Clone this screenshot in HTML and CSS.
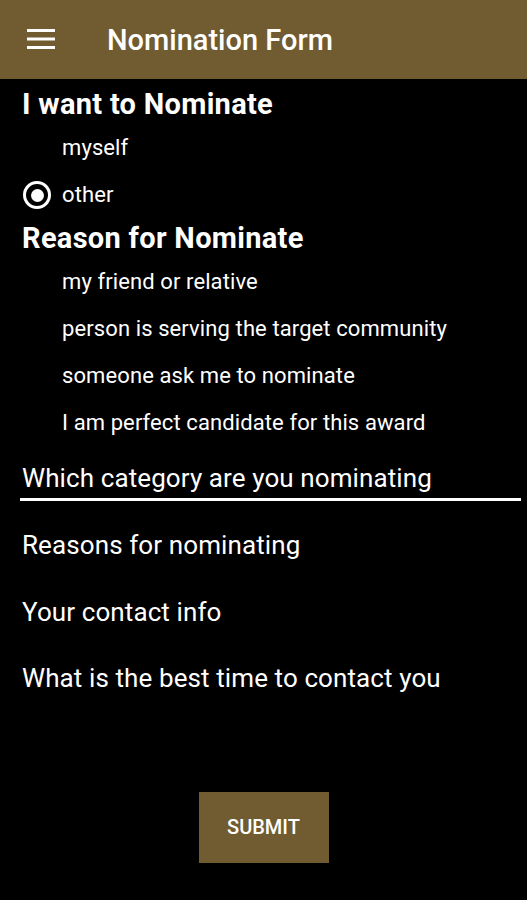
FILE: index.html
```html
<!DOCTYPE html>
<html lang="en">
<head>
  <meta charset="UTF-8" />
  <title>Nomination Form</title>
  <link rel="stylesheet" href="styles.css">
</head>
<body>

<header class="topbar">
  <svg class="menu" width="28" height="22" viewBox="0 0 28 22">
    <rect x="0" y="1" width="28" height="3" fill="#fff"/>
    <rect x="0" y="9.5" width="28" height="3" fill="#fff"/>
    <rect x="0" y="18" width="28" height="3" fill="#fff"/>
  </svg>
  <h1>Nomination Form</h1>
</header>

<main class="form">
  <h2>I want to Nominate</h2>
  <div class="opt">myself</div>
  <div class="opt"><span class="radio on"></span>other</div>

  <h2>Reason for Nominate</h2>
  <div class="opt">my friend or relative</div>
  <div class="opt">person is serving the target community</div>
  <div class="opt">someone ask me to nominate</div>
  <div class="opt">I am perfect candidate for this award</div>

  <div class="field active">Which category are you nominating</div>
  <div class="field first">Reasons for nominating</div>
  <div class="field">Your contact info</div>
  <div class="field">What is the best time to contact you</div>

  <div class="actions">
    <button>SUBMIT</button>
  </div>
</main>

</body>
</html>
```

FILE: styles.css
```css
body { font-family: Roboto, "Noto Sans", sans-serif; margin: 0; background: #000; color: #fff; }
.topbar { background: #715b31; height: 79px; display: flex; align-items: center; padding: 0 0 0 27px; box-sizing: border-box; }
.topbar .menu { margin-top: -2px; }
.topbar h1 { margin: 0 0 0 52px; font-size: 29px; font-weight: 500; }
.form { padding: 5px 0 0 22px; }
.form h2 { margin: 0; font-size: 29px; font-weight: 700; line-height: 40px; letter-spacing: 0.3px; }
.opt { position: relative; padding-left: 40px; font-size: 22px; line-height: 47px; height: 47px; letter-spacing: 0.1px; }
.radio { position: absolute; left: 1px; top: 10px; width: 28px; height: 28px; border: 3px solid #fff; border-radius: 50%; box-sizing: border-box; }
.radio.on::after { content: ""; position: absolute; left: 4.5px; top: 4.5px; width: 13px; height: 13px; border-radius: 50%; background: #fff; }
.field { font-size: 26px; line-height: 66.5px; height: 66.5px; margin-right: 5px; letter-spacing: 0.1px; }
.field.first { margin-top: 11px; }
.field.active { line-height: 40px; height: 40px; border-bottom: 3px solid #fff; margin: 12px 6px 0 -2px; padding-left: 2px; }
.actions { display: flex; justify-content: center; margin-top: 80px; padding-right: 22px; }
.actions button { background: #715b31; color: #fff; border: none; width: 130px; height: 71px; font-family: Roboto, sans-serif; font-size: 20px; font-weight: 500; }
```
